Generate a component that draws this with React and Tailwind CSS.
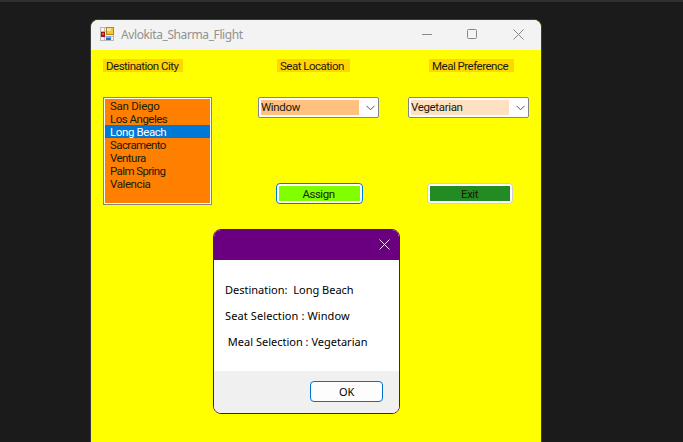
import React from 'react';

const cities = [
  ['San Diego', 'tracking-[-0.25px]'],
  ['Los Angeles', 'tracking-[-0.5px]'],
  ['Long Beach', 'tracking-[-0.4px]'],
  ['Sacramento', 'tracking-[-0.6px]'],
  ['Ventura', 'tracking-[-0.55px]'],
  ['Palm Spring', 'tracking-[-0.6px]'],
  ['Valencia', 'tracking-[-0.4px]'],
];

function FormIcon() {
  return (
    <svg width="15" height="15" viewBox="0 0 15 15" className="mt-[-1px] shrink-0" shapeRendering="crispEdges">
      <path d="M0.5 0.5H13.5V13.5H0.5ZM0.5 4.5H6M4.5 0.5V13.5M0.5 9.5H13.5" fill="#f4f4f4" stroke="#b8b8b8" />
      <rect x="6" y="0" width="8" height="8" fill="#b9860f" />
      <rect x="7" y="1" width="6" height="6" fill="#fbc52c" />
      <rect x="7" y="1" width="4" height="3" fill="#ffe391" />
      <rect x="1" y="5" width="4" height="5" fill="#9d1515" />
      <rect x="2" y="6" width="2" height="2" fill="#e65a4e" />
      <rect x="6" y="9" width="5" height="4" fill="#2d68c9" />
      <rect x="6" y="9" width="5" height="2" fill="#77adf4" />
    </svg>
  );
}

function Combo({ value, fill }) {
  return (
    <div className="flex h-[21px] w-[121px] items-center rounded-[2px] border border-[#858585] bg-white pl-[2px] pr-[3px]">
      <div className={`h-[15px] w-[98px] leading-[15px] whitespace-nowrap tracking-[-0.35px] ${fill}`}>{value}</div>
      <svg width="9" height="6" viewBox="0 0 9 6" className="ml-auto mt-px" fill="none" stroke="#555">
        <path d="M0.5 0.8L4.5 4.8L8.5 0.8" />
      </svg>
    </div>
  );
}

function MessageBox() {
  return (
    <div className="absolute left-[213px] top-[229px] flex h-[185px] w-[187px] flex-col overflow-hidden rounded-[8px] border border-[#6a0080] bg-white font-['Noto_Sans',sans-serif] text-[11px] text-black">
      <div className="flex h-[30px] shrink-0 items-center justify-end bg-[#6a0080] pr-[9px]">
        <svg width="11" height="11" viewBox="0 0 11 11" className="mt-[-2px]" fill="none" stroke="#f3e8f5">
          <path d="M0.5 0.5L10.5 10.5M10.5 0.5L0.5 10.5" />
        </svg>
      </div>
      <div className="flex flex-1 flex-col whitespace-pre pl-[11px] pt-[17px] leading-[26px]">
        <span>Destination:  Long Beach</span>
        <span className="tracking-[0.1px]">Seat Selection : Window</span>
        <span> Meal Selection : Vegetarian</span>
      </div>
      <div className="flex h-[42px] shrink-0 justify-end bg-[#f0f0f0] pr-4 pt-[10px]">
        <button className="h-[21px] w-[73px] rounded-[4px] border border-[#0072ce] bg-[#fdfdfd] leading-[20px] tracking-[-0.3px]">OK</button>
      </div>
    </div>
  );
}

export default function App() {
  return (
    <div className="relative flex h-[442px] w-[683px] flex-col overflow-hidden bg-[#1b1b1b]">
      <div className="h-[2px] shrink-0 bg-[#303030]" />
      <div className="ml-[90px] mt-[17px] flex w-[452px] flex-1 flex-col overflow-hidden rounded-t-[8px] border-x border-t border-[#3b3b3b] bg-[#ffff00] font-['Roboto',Arial,sans-serif] text-[11.5px] tracking-[-0.5px] text-[#1a1a0a]">
        <div className="flex h-[30px] shrink-0 items-center bg-[#f3f3f3] pl-[9px] pr-[17px]">
          <FormIcon />
          <span className="ml-[6px] font-['Noto_Sans',sans-serif] text-[12px] tracking-[-0.4px] text-[#919191]">Avlokita_Sharma_Flight</span>
          <svg width="102" height="11" viewBox="0 0 102 11" className="ml-auto mt-[-1px]" fill="none" stroke="#888">
            <path d="M0 5.5H10" />
            <rect x="45.5" y="0.5" width="9" height="9" rx="1" />
            <path d="M91.5 0.5L101.5 10.5M101.5 0.5L91.5 10.5" />
          </svg>
        </div>
        <div className="flex h-[22px] items-end whitespace-nowrap leading-[15px]">
          <span className="ml-3 h-[13px] w-[80px] bg-[#ffd700] pl-[3px]">Destination City</span>
          <span className="ml-[94px] h-[13px] w-[73px] bg-[#ffd700] pl-[3px]">Seat Location</span>
          <span className="ml-[79px] h-[13px] w-[85px] bg-[#ffd700] pl-[3px]">Meal Preference</span>
        </div>
        <div className="mt-[25px] flex items-start">
          <div className="ml-3 h-[108px] w-[109px] border border-[#828282] bg-white p-px">
            <ul className="h-full bg-[#ff8000]">
              {cities.map(([city, spacing]) => (
                <li key={city} className={`h-[13px] pl-[5px] leading-[15px] ${spacing} ${city === 'Long Beach' ? 'bg-[#0078d7] text-white' : ''}`}>
                  {city}
                </li>
              ))}
            </ul>
          </div>
          <div className="ml-[46px] flex flex-col">
            <Combo value="Window" fill="bg-[#ffc080]" />
            <button className="ml-[18px] mt-[65px] h-[21px] w-[87px] rounded-[4px] border border-[#0078d4] bg-white p-[2px]">
              <span className="block h-[15px] bg-[#80ff00] pr-[2px] leading-[17px] tracking-[-0.5px]">Assign</span>
            </button>
          </div>
          <div className="ml-[29px] flex flex-col">
            <Combo value="Vegetarian" fill="bg-[#ffe0c0]" />
            <button className="ml-[19px] mt-[65px] h-[21px] w-[86px] rounded-[4px] border border-[#d0d0d0] bg-white p-[2px]">
              <span className="block h-[15px] bg-[#228b22] pr-px leading-[17px] tracking-[-0.5px]">Exit</span>
            </button>
          </div>
        </div>
      </div>
      <MessageBox />
    </div>
  );
}
